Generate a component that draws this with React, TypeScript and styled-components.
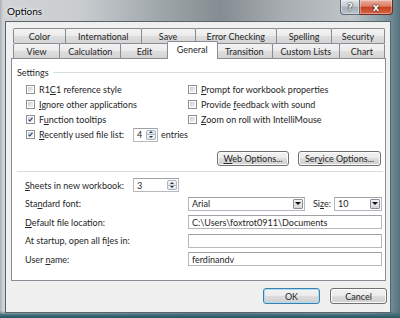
import React from "react";
import styled, {createGlobalStyle} from "styled-components";

const GlobalStyle = createGlobalStyle`
  html, body {
    margin: 0;
    padding: 0;
  }

  body {
    width: 400px;
    height: 318px;
    overflow: hidden;
    font-family: Lato, "Open Sans", sans-serif;
    font-size: 9px;
    color: #262626;
  }
`

const StyledWindow = styled.div`
  width: 400px;
  height: 318px;
  box-sizing: border-box;

  display: flex;
  flex-direction: column;

  background:
    linear-gradient(0deg, #2a5561 0px, #3f6b77 3px, rgba(63, 107, 119, 0) 7px),
    linear-gradient(90deg, #a9afb3 0px, #d0d4d7 3px, #c9cdd0 20%, #a3aaae 38%, #868d92 55%, #a9afb3 72%, #c0c5c8 88%, #7c95a0 97%, #55727d 100%);
`

const StyledTitleBar = styled.div`
  height: 21px;

  display: flex;
  flex-direction: row;
  align-items: flex-start;

  padding-left: 7px;
  padding-right: 7px;
`

const StyledTitle = styled.span`
  flex: 1;

  font-size: 10px;
  line-height: 22px;
  color: #000;
  text-shadow: 0 0 5px rgba(255, 255, 255, 0.95), 0 0 2px rgba(255, 255, 255, 0.9);
`

const StyledCaptionButton = styled.div<{ $kind: "help" | "close" }>`
  width: ${props => props.$kind === "help" ? 20 : 33}px;
  height: 15px;
  box-sizing: border-box;

  display: flex;
  align-items: center;
  justify-content: center;

  border: 1px solid ${props => props.$kind === "help" ? "#5f6a73" : "#6e2a1f"};
  border-top: none;
  border-left: ${props => props.$kind === "help" ? "1px solid #5f6a73" : "none"};
  border-radius: ${props => props.$kind === "help" ? "0 0 0 4px" : "0 0 4px 0"};

  background: ${props => props.$kind === "help"
    ? "linear-gradient(#dfe4e8 0%, #c3cbd2 45%, #a5afb8 50%, #b9c3cb 100%)"
    : "linear-gradient(#eab0a0 0%, #dd7d66 45%, #c7401f 50%, #d5674a 100%)"};
  box-shadow: inset 0 0 0 1px rgba(255, 255, 255, 0.35);

  color: #fff;
  font-family: "DejaVu Sans", sans-serif;
  font-weight: bold;
  font-size: ${props => props.$kind === "help" ? 9 : 10}px;
  text-shadow: 0 0 2px #222, 0 0 1px #000;
`

const StyledFrameBody = styled.div`
  flex: 1;

  display: flex;
  padding: 0 9px 5px 5px;
`

const StyledClient = styled.div`
  flex: 1;

  display: flex;
  flex-direction: column;

  background: #f0f0f0;
  border: 1px solid #59636a;
  padding: 6px 3px 8px 5px;
`

const StyledTabRow = styled.div`
  height: 15px;

  display: flex;
  flex-direction: row;

  margin: 0 2px;
`

const StyledTab = styled.div<{ $w: number, $active?: boolean }>`
  flex: ${props => props.$w} 0 0px;
  height: ${props => props.$active ? 18 : 15}px;
  box-sizing: border-box;

  display: flex;
  align-items: center;
  justify-content: center;

  margin-left: ${props => props.$active ? -2 : -1}px;
  margin-right: ${props => props.$active ? -1 : 0}px;
  margin-top: ${props => props.$active ? -2 : 0}px;
  &:first-child {
    margin-left: 0;
  }

  position: relative;
  z-index: ${props => props.$active ? 2 : 1};

  border: 1px solid #898c95;
  border-bottom: none;
  border-radius: 2px 2px 0 0;

  background: ${props => props.$active
    ? "#fff"
    : "linear-gradient(#f3f3f3 0%, #ebebeb 50%, #dedede 51%, #d4d4d4 100%)"};

  white-space: nowrap;
  padding-bottom: ${props => props.$active ? 2 : 0}px;
`

const StyledPanel = styled.div`
  flex: 1;

  display: flex;
  flex-direction: column;

  margin-right: 1px;
  background: #fff;
  border: 1px solid #898c95;
`

const StyledGroupHeader = styled.div`
  height: 12px;

  display: flex;
  align-items: center;
  gap: 4px;

  margin: 7px 2px 0 5px;

  &::after {
    content: "";
    flex: 1;
    height: 1px;
    background: #d8dde1;
  }
`

const StyledCheckGrid = styled.div`
  display: grid;
  grid-template-columns: 162px 1fr;
  grid-auto-rows: 15px;

  margin-top: 4px;
  padding-left: 14px;
`

const StyledCheckRow = styled.div`
  display: flex;
  flex-direction: row;
  align-items: center;

  white-space: nowrap;
`

const StyledCheckBox = styled.span`
  width: 9px;
  height: 9px;
  box-sizing: border-box;
  flex-shrink: 0;
  margin-right: 4px;

  display: flex;
  align-items: center;
  justify-content: center;

  border: 1px solid #8e8f8f;
  padding: 1px;
  background: linear-gradient(135deg, #c8ccd2, #f6f7f8) content-box, #fff;
`

const StyledCheckLabel = styled.span<{ $w?: number }>`
  ${props => props.$w ? `width: ${props.$w}px;` : ""}
  flex-shrink: 0;
`

const StyledAfterSpin = styled.span`
  margin-left: 3px;
`

const StyledKey = styled.u`
  text-decoration: underline;
  text-underline-offset: 1px;
`

const StyledButtonRow = styled.div`
  display: flex;
  flex-direction: row;
  justify-content: flex-end;
  gap: 9px;

  margin-top: 9px;
  padding-right: 4px;
`

const StyledButton = styled.button<{ $w: number, $h: number, $default?: boolean }>`
  width: ${props => props.$w}px;
  height: ${props => props.$h}px;
  box-sizing: border-box;
  padding: 0;

  font-family: inherit;
  font-size: 9px;
  color: #262626;

  border: 1px solid ${props => props.$default ? "#3c7fb1" : "#707070"};
  border-radius: 3px;
  background: linear-gradient(#f2f2f2 0%, #ebebeb 49%, #dddddd 50%, #cfcfcf 100%);
  box-shadow: inset 0 0 0 1px ${props => props.$default ? "#a9dcf4" : "#fbfbfb"};
`

const StyledSeparator = styled.div`
  height: 1px;
  margin: 5px 2px 0 5px;
  background: #d8dde1;
`

const StyledForm = styled.div`
  display: grid;
  grid-template-columns: 108px 55px 1fr;
  grid-auto-rows: 14px;
  row-gap: 4.5px;
  align-items: center;

  margin-top: 6px;
  padding: 0 3px 0 13px;
`

const StyledFormLabel = styled.span<{ $span?: boolean }>`
  grid-column: ${props => props.$span ? "1 / 3" : "1 / 2"};
  white-space: nowrap;
`

const StyledFieldCell = styled.div`
  grid-column: 3 / 4;

  display: flex;
  flex-direction: row;
  align-items: center;
  height: 14px;
`

const StyledTextBox = styled.div<{ $w?: number }>`
  ${props => props.$w ? `width: ${props.$w}px;` : "flex: 1;"}
  height: 14px;
  box-sizing: border-box;

  display: flex;
  align-items: center;

  border: 1px solid #b5b8be;
  border-top-color: #9ea2a8;
  background: #fff;
  padding: 0 1px 0 3px;

  white-space: nowrap;
  overflow: hidden;
`

const StyledFieldText = styled.span`
  flex: 1;
`

const StyledSpinButtons = styled.div`
  width: 10px;
  height: 10px;

  display: flex;
  flex-direction: column;
`

const StyledSpinArrow = styled.div<{ $dir: "up" | "down" }>`
  flex: 1;

  display: flex;
  align-items: center;
  justify-content: center;

  border: 1px solid #a9b5c1;
  ${props => props.$dir === "down" ? "border-top: none;" : ""}
  border-radius: ${props => props.$dir === "up" ? "2px 2px 0 0" : "0 0 2px 2px"};
  background: linear-gradient(#f4f7fa, #dbe3ea);

  &::after {
    content: "";
    border-left: 2px solid transparent;
    border-right: 2px solid transparent;
    ${props => props.$dir === "up" ? "border-bottom: 2px solid #333;" : "border-top: 2px solid #333;"}
  }
`

const StyledDropButton = styled.div`
  width: 10px;
  height: 10px;
  box-sizing: border-box;

  display: flex;
  align-items: center;
  justify-content: center;

  border: 1px solid #8d9196;
  border-radius: 1px;
  background: linear-gradient(#f3f3f3, #d6d6d6);

  &::after {
    content: "";
    border-left: 3px solid transparent;
    border-right: 3px solid transparent;
    border-top: 3px solid #111;
  }
`

const StyledSizeLabel = styled.span`
  margin-left: 8px;
`

const StyledSizeCombo = styled(StyledTextBox)`
  margin-left: auto;
`

const StyledFooter = styled.div`
  display: flex;
  flex-direction: row;
  justify-content: flex-end;
  gap: 10px;

  margin-top: 7px;
`

const CheckMark = () => (
    <svg width="7" height="7" viewBox="0 0 7 7">
        <polyline points="0.8,3.6 2.6,5.6 6.3,0.9" fill="none" stroke="#26406e" strokeWidth="1.5"/>
    </svg>
)

type CheckItemProps = {
    checked?: boolean
    labelWidth?: number
    children: React.ReactNode
    appends?: React.ReactNode
}

const CheckItem = (props: CheckItemProps) => (
    <StyledCheckRow>
        <StyledCheckBox>{props.checked && <CheckMark/>}</StyledCheckBox>
        <StyledCheckLabel $w={props.labelWidth}>{props.children}</StyledCheckLabel>
        {props.appends}
    </StyledCheckRow>
)

const SpinBox = (props: { value: string, w: number }) => (
    <StyledTextBox $w={props.w}>
        <StyledFieldText>{props.value}</StyledFieldText>
        <StyledSpinButtons>
            <StyledSpinArrow $dir="up"/>
            <StyledSpinArrow $dir="down"/>
        </StyledSpinButtons>
    </StyledTextBox>
)

const topTabs = [
    {label: "Color", w: 52},
    {label: "International", w: 76},
    {label: "Save", w: 54},
    {label: "Error Checking", w: 82},
    {label: "Spelling", w: 55},
    {label: "Security", w: 53},
]

const bottomTabs = [
    {label: "View", w: 46},
    {label: "Calculation", w: 61},
    {label: "Edit", w: 47},
    {label: "General", w: 50, active: true},
    {label: "Transition", w: 56},
    {label: "Custom Lists", w: 67},
    {label: "Chart", w: 45},
]

const App = () => {
    return (
        <>
            <GlobalStyle/>
            <StyledWindow>
                <StyledTitleBar>
                    <StyledTitle>Options</StyledTitle>
                    <StyledCaptionButton $kind="help">?</StyledCaptionButton>
                    <StyledCaptionButton $kind="close">x</StyledCaptionButton>
                </StyledTitleBar>

                <StyledFrameBody>
                    <StyledClient>
                        <StyledTabRow>
                            {topTabs.map(tab => (
                                <StyledTab key={tab.label} $w={tab.w}>{tab.label}</StyledTab>
                            ))}
                        </StyledTabRow>
                        <StyledTabRow>
                            {bottomTabs.map(tab => (
                                <StyledTab key={tab.label} $w={tab.w} $active={tab.active}>{tab.label}</StyledTab>
                            ))}
                        </StyledTabRow>

                        <StyledPanel>
                            <StyledGroupHeader>Settings</StyledGroupHeader>

                            <StyledCheckGrid>
                                <CheckItem>R1<StyledKey>C</StyledKey>1 reference style</CheckItem>
                                <CheckItem><StyledKey>P</StyledKey>rompt for workbook properties</CheckItem>
                                <CheckItem><StyledKey>I</StyledKey>gnore other applications</CheckItem>
                                <CheckItem>Provide <StyledKey>f</StyledKey>eedback with sound</CheckItem>
                                <CheckItem checked>F<StyledKey>u</StyledKey>nction tooltips</CheckItem>
                                <CheckItem><StyledKey>Z</StyledKey>oom on roll with IntelliMouse</CheckItem>
                                <CheckItem
                                    checked
                                    labelWidth={94}
                                    appends={<>
                                        <SpinBox value="4" w={46}/>
                                        <StyledAfterSpin>entries</StyledAfterSpin>
                                    </>}
                                >
                                    <StyledKey>R</StyledKey>ecently used file list:
                                </CheckItem>
                            </StyledCheckGrid>

                            <StyledButtonRow>
                                <StyledButton $w={72} $h={15}><StyledKey>W</StyledKey>eb Options...</StyledButton>
                                <StyledButton $w={83} $h={15}>Ser<StyledKey>v</StyledKey>ice Options...</StyledButton>
                            </StyledButtonRow>

                            <StyledSeparator/>

                            <StyledForm>
                                <StyledFormLabel><StyledKey>S</StyledKey>heets in new workbook:</StyledFormLabel>
                                <SpinBox value="3" w={46}/>
                                <span/>

                                <StyledFormLabel $span>Sta<StyledKey>n</StyledKey>dard font:</StyledFormLabel>
                                <StyledFieldCell>
                                    <StyledTextBox $w={117}>
                                        <StyledFieldText>Arial</StyledFieldText>
                                        <StyledDropButton/>
                                    </StyledTextBox>
                                    <StyledSizeLabel>Si<StyledKey>z</StyledKey>e:</StyledSizeLabel>
                                    <StyledSizeCombo $w={48}>
                                        <StyledFieldText>10</StyledFieldText>
                                        <StyledDropButton/>
                                    </StyledSizeCombo>
                                </StyledFieldCell>

                                <StyledFormLabel $span><StyledKey>D</StyledKey>efault file location:</StyledFormLabel>
                                <StyledFieldCell>
                                    <StyledTextBox>C:\Users\foxtrot0911\Documents</StyledTextBox>
                                </StyledFieldCell>

                                <StyledFormLabel $span>At startup, open all fi<StyledKey>l</StyledKey>es in:</StyledFormLabel>
                                <StyledFieldCell>
                                    <StyledTextBox/>
                                </StyledFieldCell>

                                <StyledFormLabel $span>User <StyledKey>n</StyledKey>ame:</StyledFormLabel>
                                <StyledFieldCell>
                                    <StyledTextBox>ferdinandv</StyledTextBox>
                                </StyledFieldCell>
                            </StyledForm>
                        </StyledPanel>

                        <StyledFooter>
                            <StyledButton $w={57} $h={16} $default>OK</StyledButton>
                            <StyledButton $w={57} $h={16}>Cancel</StyledButton>
                        </StyledFooter>
                    </StyledClient>
                </StyledFrameBody>
            </StyledWindow>
        </>
    )
}
export default App;
